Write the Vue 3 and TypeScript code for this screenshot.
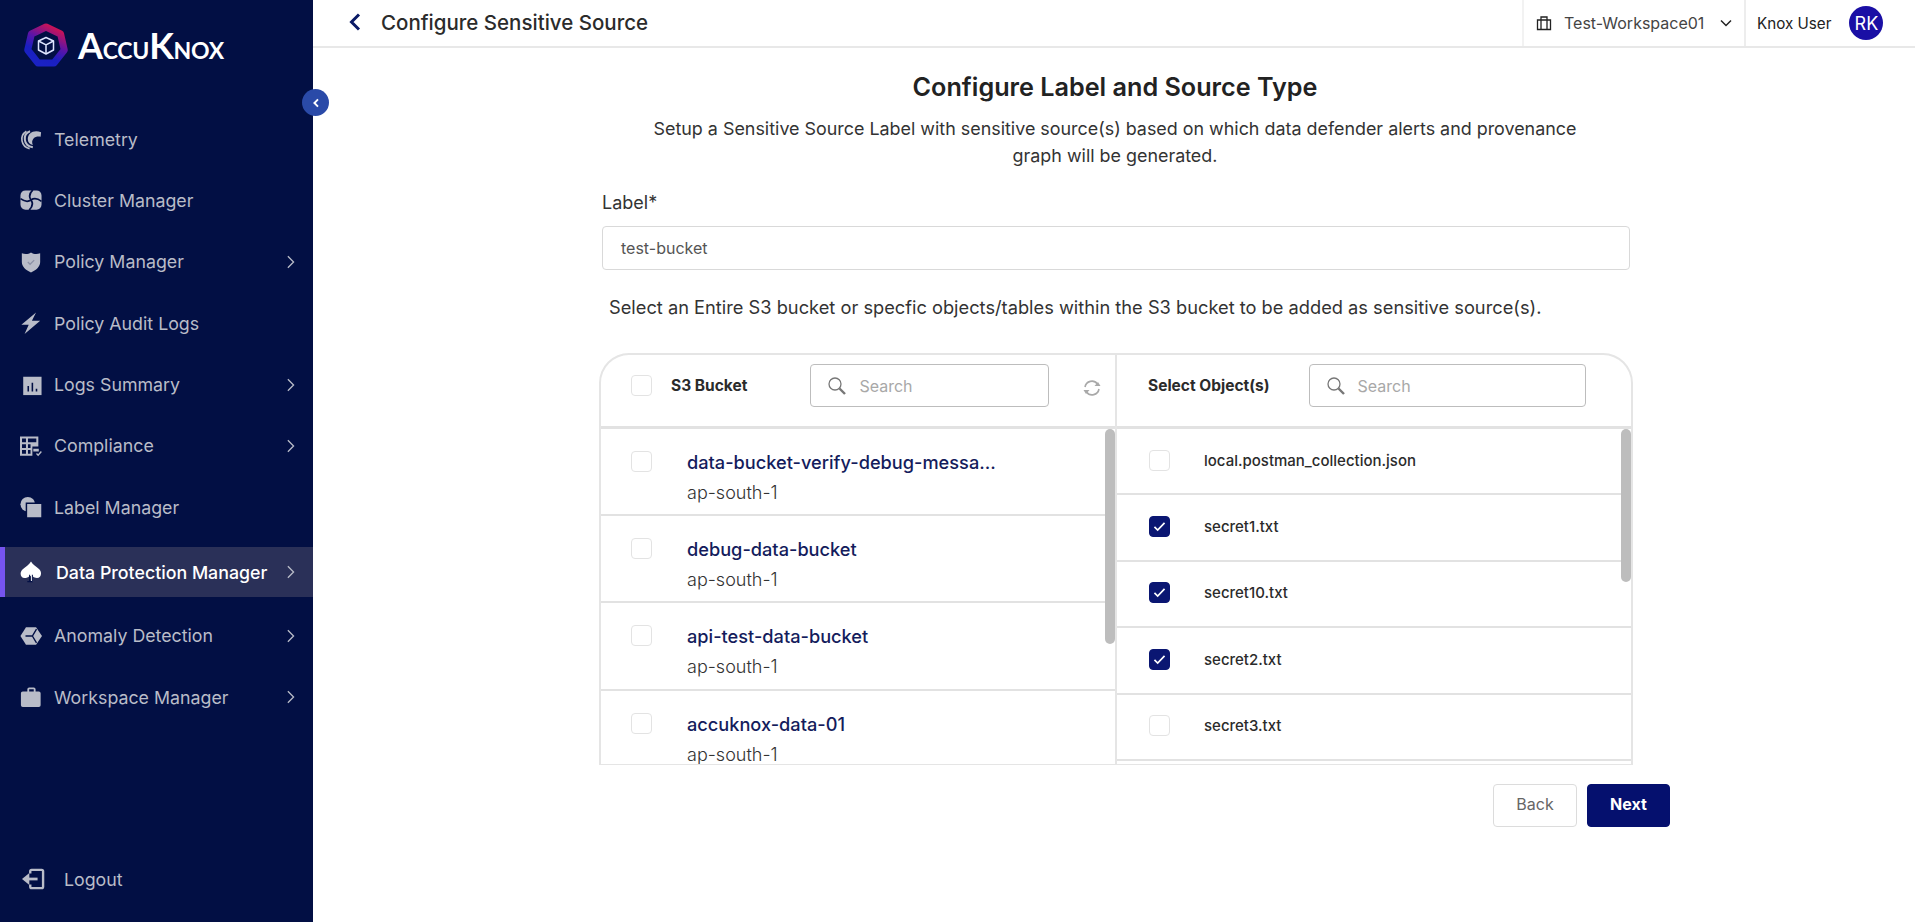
<script setup lang="ts">
interface Shape { d: string; fill?: string; stroke?: string; sw?: number }
interface NavItem { label: string; arrow: boolean; active?: boolean; icon: Shape[] }

const bg = '#020f44'
const nav: NavItem[] = [
  { label: 'Telemetry', arrow: false, icon: [
    { d: 'M23 4.500C15 1.500 8.500 5.500 8.500 12c0 3.500 2 5.800 5.500 6.500-1.200-2.700-1-5 .8-7C16.500 9.500 19.500 9 22.500 9.500z' },
    { d: 'M11 3.500C6.500 5 4.800 9 5.300 13c.5 4.200 3.800 7.200 8.700 8', fill: 'none', stroke: '#b9bcc8', sw: 2.200 },
    { d: 'M7 3.500C3 6 1.500 10 2.200 14c.8 4.500 4 7.500 8.300 8.500', fill: 'none', stroke: '#b9bcc8', sw: 1.800 },
  ] },
  { label: 'Cluster Manager', arrow: false, icon: [
    { d: 'M6 1.500h12a5.500 5.500 0 0 1 5.500 5.500v10a5.500 5.500 0 0 1-5.500 5.500H6A5.500 5.500 0 0 1 .5 17V7A5.500 5.500 0 0 1 6 1.500z' },
    { d: 'M12 12C9.500 8.500 10.500 4.500 14 1M12 12c3.500-2.500 7.500-1.500 11.500 1.500M12 12c2.500 3.500 1.500 7.500-2 11M12 12c-3.500 2.500-7.500 1.500-11.500-1.500', fill: 'none', stroke: bg, sw: 1.900 },
  ] },
  { label: 'Policy Manager', arrow: true, icon: [
    { d: 'M2 2.500C6 3.800 9 3.500 12 1.500c3 2 6 2.300 10 1V12c0 5-4.500 9-10 11.500C6.500 21 2 17 2 12z' },
    { d: 'M8.500 12l2.500 2.500 4.500-4.500', fill: 'none', stroke: '#8b90a5', sw: 1.300 },
  ] },
  { label: 'Policy Audit Logs', arrow: false, icon: [
    { d: 'M17.500 .5L1.500 14h8L5 24 22 9.500h-9z' },
  ] },
  { label: 'Logs Summary', arrow: true, icon: [
    { d: 'M3.500 3h20v20h-20z' },
    { d: 'M9 13v6M13.500 9.500V19M18 16v3', fill: 'none', stroke: bg, sw: 1.700 },
  ] },
  { label: 'Compliance', arrow: true, icon: [
    { d: 'M0 1.500h20v11h-6.500v10H0zM2.200 3.700v4.100h4.300V3.700zM8.700 3.700v4.100h9.100V3.700zM2.200 10v4.200h4.300V10zM8.700 10v4.200h2.800V10zM2.200 16.400v4h4.300v-4zM8.700 16.400v4h2.800v-4z' },
    { d: 'M14.500 15h6v3h-6z' },
    { d: 'M18 20.200l1.800 1.800 3.500-4', fill: 'none', stroke: '#b9bcc8', sw: 1.500 },
  ] },
  { label: 'Label Manager', arrow: false, icon: [
    { d: 'M8.500 1a8 8 0 1 1 0 16 8 8 0 0 1 0-16z' },
    { d: 'M7 8h17v16H7z', stroke: bg, sw: 1.600 },
  ] },
  { label: 'Data Protection Manager', arrow: true, active: true, icon: [
    { d: 'M12 .5c2 3.500 5.500 5.500 9 8.500 3.500 3.500 2 9.500-2.500 9.500-2 0-3.500-.5-4.500-1.500v6h-2zM10.500 16c-1.500 2-3.500 2.500-5.500 2.500C.5 18.500-1 12.500 3 9c3-2.500 7-5 9-8.500v16z', fill: '#ffffff' },
    { d: 'M8 22.500h5.500v-7.500M10.500 15v7.500', fill: 'none', stroke: bg, sw: 1.100 },
  ] },
  { label: 'Anomaly Detection', arrow: true, icon: [
    { d: 'M6.500 2.500h11l6.500 9.500-6.500 9.500h-11L.5 12z' },
    { d: 'M6 12h7.500l4.500-7.500M13.500 12l4.500 7.500', fill: 'none', stroke: bg, sw: 1.500 },
  ] },
  { label: 'Workspace Manager', arrow: true, icon: [
    { d: 'M8 6V3.500a2 2 0 0 1 2-2h5a2 2 0 0 1 2 2V6h3.500a2 2 0 0 1 2 2v13a2 2 0 0 1-2 2H3a2 2 0 0 1-2-2V8a2 2 0 0 1 2-2zM10 3.500V6h5V3.500z' },
  ] },
]

const buckets = [
  { name: 'data-bucket-verify-debug-messa...', region: 'ap-south-1' },
  { name: 'debug-data-bucket', region: 'ap-south-1' },
  { name: 'api-test-data-bucket', region: 'ap-south-1' },
  { name: 'accuknox-data-01', region: 'ap-south-1' },
]
const objects = [
  { name: 'local.postman_collection.json', checked: false },
  { name: 'secret1.txt', checked: true },
  { name: 'secret10.txt', checked: true },
  { name: 'secret2.txt', checked: true },
  { name: 'secret3.txt', checked: false },
  { name: 'secret4.txt', checked: false },
]
</script>

<template>
  <div class="app">
    <aside class="sidebar">
      <div class="logo">
        <svg class="logo-mark" viewBox="0 0 48 48" width="48" height="48">
          <defs>
            <linearGradient id="ring" x1="0.8" y1="0" x2="0.3" y2="1">
              <stop offset="0" stop-color="#d4134f" />
              <stop offset="0.45" stop-color="#5a14a8" />
              <stop offset="0.75" stop-color="#1a1fc0" />
              <stop offset="1" stop-color="#1a22c4" />
            </linearGradient>
          </defs>
          <path d="M24 5L38.600 12 42.300 28 32 41H16L5.700 28 9.400 12z" fill="none" stroke="url(#ring)" stroke-width="7" stroke-linejoin="round" />
          <g fill="none" stroke="#dfe6ff" stroke-width="1.500" stroke-linejoin="round">
            <path d="M24 15.500l7.500 3.500v9L24 32l-7.500-4v-9z" />
            <path d="M16.500 19l7.500 3.800 7.500-3.800M24 22.800V32" />
          </g>
        </svg>
        <span class="logo-text"><span class="cap">A</span>CCU<span class="cap">K</span>NOX</span>
      </div>

      <nav class="nav">
        <div v-for="item in nav" :key="item.label" class="nav-item" :class="{ active: item.active }">
          <svg class="nav-icon" viewBox="0 0 24 24" width="22" height="22">
            <path
              v-for="(s, i) in item.icon"
              :key="i"
              :d="s.d"
              :fill="s.fill ?? '#b9bcc8'"
              :stroke="s.stroke ?? 'none'"
              :stroke-width="s.sw ?? 0"
              fill-rule="evenodd"
            />
          </svg>
          <span class="nav-label">{{ item.label }}</span>
          <svg v-if="item.arrow" class="nav-arrow" viewBox="0 0 10 16" width="9" height="14">
            <path d="M2 1.500L8.500 8 2 14.500" fill="none" stroke="#b9bcc8" stroke-width="1.500" />
          </svg>
        </div>
      </nav>

      <div class="logout">
        <svg viewBox="0 0 26 24" width="26" height="22">
          <path d="M10 6V3.500A1.500 1.500 0 0 1 11.500 2h11A1.500 1.500 0 0 1 24 3.500v17a1.500 1.500 0 0 1-1.500 1.500h-11A1.500 1.500 0 0 1 10 20.500V18" fill="none" stroke="#b9bcc8" stroke-width="2.600" />
          <path d="M8 12h10" fill="none" stroke="#b9bcc8" stroke-width="3" />
          <path d="M1 12l8-6.500v13z" fill="#b9bcc8" />
        </svg>
        <span>Logout</span>
      </div>

      <div class="collapse">
        <svg viewBox="0 0 10 12" width="8" height="10">
          <path d="M7.500 1.500L3 6l4.500 4.500" fill="none" stroke="#fff" stroke-width="2.400" />
        </svg>
      </div>
    </aside>

    <div class="page">
      <header class="topbar">
        <div class="top-left">
          <svg viewBox="0 0 14 20" width="14" height="20">
            <path d="M11 2.500L3.500 10l7.500 7.500" fill="none" stroke="#0a1a66" stroke-width="3" />
          </svg>
          <span class="page-title">Configure Sensitive Source</span>
        </div>
        <div class="workspace">
          <svg viewBox="0 0 16 16" width="16" height="16">
            <path d="M1.500 5h13v9.500h-13zM5 5V2h6v3M5 5v9.500M11 5v9.500" fill="none" stroke="#222" stroke-width="1.300" />
          </svg>
          <span class="ws-name">Test-Workspace01</span>
          <svg viewBox="0 0 12 8" width="12" height="8">
            <path d="M1 1.500l5 5 5-5" fill="none" stroke="#222" stroke-width="1.500" />
          </svg>
        </div>
        <div class="user">
          <span class="user-name">Knox User</span>
          <span class="avatar">RK</span>
        </div>
      </header>

      <main class="main">
        <div class="intro">
          <h1>Configure Label and Source Type</h1>
          <p>Setup a Sensitive Source Label with sensitive source(s) based on which data defender alerts and provenance graph will be generated.</p>
        </div>

        <label class="field-label">Label*</label>
        <div class="field-input">test-bucket</div>
        <p class="hint">Select an Entire S3 bucket or specfic objects/tables within the S3 bucket to be added as sensitive source(s).</p>

        <section class="table">
          <div class="col col-left">
            <div class="col-head">
              <span class="check head-check"></span>
              <span class="head-title">S3 Bucket</span>
              <div class="search search-left">
                <svg viewBox="0 0 20 20" width="20" height="20">
                  <circle cx="8" cy="8" r="6" fill="none" stroke="#777" stroke-width="1.300" />
                  <path d="M12.500 12.500L18 18" stroke="#777" stroke-width="2.400" />
                </svg>
                <span>Search</span>
              </div>
              <svg class="refresh" viewBox="0 0 20 20" width="20" height="20">
                <path d="M3 9a7 7 0 0 1 12.500-3M17 11a7 7 0 0 1-12.500 3" fill="none" stroke="#a9a9a9" stroke-width="1.600" />
                <path d="M12.500 8h6l-2.500-4zM7.500 12h-6l2.500 4z" fill="#a9a9a9" />
              </svg>
            </div>
            <div class="col-body">
              <div v-for="b in buckets" :key="b.name" class="bucket-row">
                <span class="check"></span>
                <div class="bucket-text">
                  <div class="bucket-name">{{ b.name }}</div>
                  <div class="bucket-region">{{ b.region }}</div>
                </div>
              </div>
              <div class="scrollbar scroll-left"></div>
            </div>
          </div>

          <div class="col col-right">
            <div class="col-head">
              <span class="head-title head-title-right">Select Object(s)</span>
              <div class="search search-right">
                <svg viewBox="0 0 20 20" width="20" height="20">
                  <circle cx="8" cy="8" r="6" fill="none" stroke="#777" stroke-width="1.300" />
                  <path d="M12.500 12.500L18 18" stroke="#777" stroke-width="2.400" />
                </svg>
                <span>Search</span>
              </div>
            </div>
            <div class="col-body">
              <div v-for="o in objects" :key="o.name" class="object-row">
                <span class="check" :class="{ checked: o.checked }">
                  <svg v-if="o.checked" viewBox="0 0 14 12" width="13" height="11">
                    <path d="M1.500 6.500l3.500 3.500 7.500-8" fill="none" stroke="#fff" stroke-width="1.800" />
                  </svg>
                </span>
                <span class="object-name">{{ o.name }}</span>
              </div>
              <div class="scrollbar scroll-right"></div>
            </div>
          </div>
        </section>

        <div class="actions">
          <button class="btn btn-back" type="button">Back</button>
          <button class="btn btn-next" type="button">Next</button>
        </div>
      </main>
    </div>
  </div>
</template>

<style>
html, body { margin: 0; background: #fff; }
</style>

<style scoped>
* { box-sizing: border-box; }
.app {
  display: flex;
  width: 1915px;
  height: 922px;
  overflow: hidden;
  font-family: Inter, "Liberation Sans", sans-serif;
  color: #2b2b2b;
}
.sidebar {
  position: relative;
  width: 313px;
  flex: none;
  background: #020f44;
  display: flex;
  flex-direction: column;
}
.logo {
  height: 114px;
  flex: none;
  padding: 22px 0 0 22px;
  display: flex;
  align-items: flex-start;
}
.logo-text {
  margin-left: 8px;
  height: 46px;
  line-height: 46px;
  font-family: Lato, sans-serif;
  font-weight: 700;
  font-size: 23px;
  color: #fff;
  letter-spacing: -0.25px;
}
.cap { font-size: 36px; }
.nav { display: flex; flex-direction: column; }
.nav-item {
  height: 50px;
  margin-bottom: 11.400px;
  padding-left: 20px;
  display: flex;
  align-items: center;
  color: #b9bcc8;
  font-size: 17.800px;
  position: relative;
}
.nav-item.active {
  margin-top: 3.500px;
  margin-bottom: 13.500px;
  background: #2a3058;
  border-left: 5px solid #7654ee;
  padding-left: 15px;
  color: #fff;
  font-weight: 500;
}
.nav-icon { flex: none; }
.nav-label { margin-left: 12px; white-space: nowrap; }
.active .nav-label { margin-left: 14px; }
.nav-arrow { position: absolute; left: 286px; top: 18px; }
.active .nav-arrow { left: 281px; }
.logout {
  margin-top: auto;
  margin-bottom: 27px;
  height: 32px;
  padding-left: 20px;
  display: flex;
  align-items: center;
  gap: 18px;
  color: #b9bcc8;
  font-size: 17.800px;
}
.collapse {
  position: absolute;
  left: 302px;
  top: 89px;
  width: 27px;
  height: 27px;
  border-radius: 50%;
  background: #2a4aa8;
  display: flex;
  align-items: center;
  justify-content: center;
  z-index: 2;
}
.page { flex: 1; min-width: 0; display: flex; flex-direction: column; }
.topbar {
  height: 48px;
  flex: none;
  border-bottom: 2px solid #e8e8e8;
  display: flex;
  align-items: stretch;
}
.top-left {
  flex: 1;
  display: flex;
  align-items: center;
  padding: 0 0 2px 35px;
  gap: 19px;
}
.page-title { font-size: 20.500px; font-weight: 500; color: #2b2b2b; }
.workspace {
  width: 224px;
  border-left: 2px solid #f2f2f2;
  border-right: 2px solid #ededed;
  display: flex;
  align-items: center;
  padding-left: 12px;
  font-size: 16px;
  color: #444;
}
.ws-name { margin: 0 16px 0 12px; white-space: nowrap; }
.user {
  width: 169px;
  display: flex;
  align-items: center;
  padding-left: 11px;
  font-size: 15.200px;
  color: #222;
}
.user-name { white-space: nowrap; }
.avatar {
  margin-left: 18px;
  width: 34px;
  height: 34px;
  border-radius: 50%;
  background: #1a0fa5;
  color: #fff;
  font-size: 18px;
  display: flex;
  align-items: center;
  justify-content: center;
}
.main { flex: 1; padding: 0 0 0 287px; }
.intro { width: 1030px; text-align: center; padding-top: 22px; }
.intro h1 {
  margin: 0;
  font-size: 25.200px;
  line-height: 34px;
  font-weight: 600;
  color: #222;
}
.intro p {
  margin: 11px auto 0;
  width: 940px;
  font-size: 17.900px;
  line-height: 27px;
  color: #333;
}
.field-label {
  display: block;
  margin: 21px 0 0 2px;
  font-size: 18px;
  line-height: 26px;
  color: #333;
}
.field-input {
  margin: 10px 0 0 2px;
  width: 1028px;
  height: 44px;
  border: 1px solid #d9d9d9;
  border-radius: 4px;
  padding-left: 18px;
  display: flex;
  align-items: center;
  font-size: 16px;
  color: #555;
}
.hint {
  margin: 25px 0 0 9px;
  font-size: 18.250px;
  line-height: 24px;
  color: #333;
  white-space: nowrap;
}
.table {
  margin: 34px 0 0 -1px;
  width: 1034px;
  height: 412px;
  border: 2px solid #e5e5e5;
  border-bottom-width: 1px;
  border-radius: 30px 30px 0 0;
  display: flex;
  overflow: hidden;
}
.col { height: 100%; display: flex; flex-direction: column; min-width: 0; }
.col-left { width: 516px; flex: none; border-right: 2px solid #e5e5e5; }
.col-right { flex: 1; }
.col-head {
  height: 74px;
  flex: none;
  padding-bottom: 10px;
  border-bottom: 3px solid #e2e2e2;
  display: flex;
  align-items: center;
  position: relative;
}
.head-check { margin-left: 30px; }
.head-title { margin-left: 19px; font-size: 15.500px; font-weight: 700; color: #2b2b2b; white-space: nowrap; }
.head-title-right { margin-left: 31px; }
.search {
  height: 43px;
  border: 1px solid #bdbdbd;
  border-radius: 4px;
  display: flex;
  align-items: center;
  padding-left: 16px;
  gap: 12px;
  font-size: 16px;
  color: #a8a8a8;
  flex: none;
}
.search-left { width: 239px; margin-left: 63px; }
.search-right { width: 277px; margin-left: 39px; }
.refresh { margin-left: 33px; margin-top: 4px; }
.col-body { flex: 1; position: relative; overflow: hidden; }
.check {
  width: 21px;
  height: 21px;
  flex: none;
  display: flex;
  align-items: center;
  justify-content: center;
  background: #fff;
  border: 1px solid #e3e3e3;
  border-radius: 4px;
}
.check.checked { background: #0a1672; border-color: #0a1672; }
.bucket-row {
  height: 87.200px;
  border-bottom: 2px solid #e2e2e2;
  padding: 22px 0 0 30px;
  display: flex;
  align-items: flex-start;
}
.bucket-text { margin-left: 35px; }
.bucket-name { font-size: 18.200px; line-height: 24px; font-weight: 500; color: #141c5c; white-space: nowrap; margin-top: -1px; }
.bucket-region { font-size: 18px; line-height: 24px; font-weight: 300; color: #333; margin-top: 7px; }
.object-row {
  height: 66.400px;
  border-bottom: 2px solid #e2e2e2;
  padding: 0 0 2px 32px;
  display: flex;
  align-items: center;
}
.object-name { margin-left: 34px; font-size: 15px; font-weight: 500; color: #2b2b2b; white-space: nowrap; }
.scrollbar {
  position: absolute;
  top: 0;
  width: 10px;
  border-radius: 5px;
  background: #bdbdbd;
}
.scroll-left { right: 0; height: 215px; }
.scroll-right { right: 0; height: 153px; }
.actions {
  width: 1070px;
  margin-top: 19px;
  display: flex;
  justify-content: flex-end;
  gap: 10px;
}
.btn {
  height: 43px;
  width: 83px;
  border-radius: 4px;
  font-family: inherit;
  font-size: 16px;
  padding: 0 0 3px;
}
.btn-back { width: 84px; background: #fff; border: 1px solid #dcdcdc; color: #666; }
.btn-next { background: #05106e; border: 1px solid #05106e; color: #fff; font-weight: 700; }
</style>
